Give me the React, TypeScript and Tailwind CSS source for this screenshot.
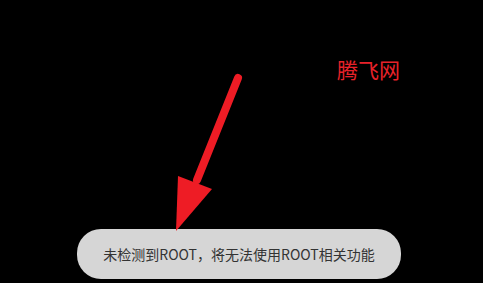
import React from "react";

export default function App() {
  return (
    <div className="relative w-[483px] h-[283px] bg-black overflow-hidden" style={{ fontFamily: '"Noto Sans CJK SC", "Noto Sans", sans-serif' }}>
      <div className="flex flex-col h-full">
        <div className="pt-[57px] pl-[337px] text-[21px] leading-[24px] text-[#e8222a]">腾飞网</div>
        <div className="flex-1" />
        <div className="ml-[77px] mb-[4px] w-[324px] h-[50px] rounded-[24px] bg-[#d6d6d6] flex items-center justify-center text-[14px] text-[#333333]">
          未检测到ROOT，将无法使用ROOT相关功能
        </div>
      </div>
      <svg className="absolute left-0 top-0" width="483" height="283" viewBox="0 0 483 283">
        <line x1="238" y1="78" x2="197" y2="180" stroke="#ee1c25" strokeWidth="8" strokeLinecap="round" />
        <polygon points="178,176 212,189 176,231" fill="#ee1c25" />
      </svg>
    </div>
  );
}
